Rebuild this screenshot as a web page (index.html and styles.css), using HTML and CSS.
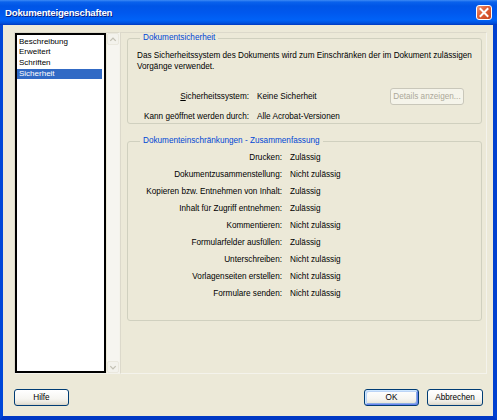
FILE: index.html
```html
<!DOCTYPE html>
<html lang="de">
<head>
<meta charset="utf-8">
<title>Dokumenteigenschaften</title>
<link rel="stylesheet" href="styles.css">
</head>
<body>
<div class="window">
  <div class="titlebar">
    <span class="title">Dokumenteigenschaften</span>
    <span class="close">
      <svg width="16" height="15" viewBox="0 0 16 15"><path d="M4.5 4 L11.5 11 M11.5 4 L4.5 11" stroke="#fff" stroke-width="2" stroke-linecap="square"/></svg>
    </span>
  </div>
  <div class="client">
    <div class="main">
      <div class="listframe">
        <ul class="list">
          <li>Beschreibung</li>
          <li>Erweitert</li>
          <li>Schriften</li>
          <li class="sel">Sicherheit</li>
        </ul>
        <div class="vscroll">
          <div class="sbtn"><svg width="11" height="11" viewBox="0 0 11 11"><path d="M2.5 7 L5.5 4 L8.5 7" fill="none" stroke="#C3C1B4" stroke-width="1.5"/></svg></div>
          <div class="track"></div>
          <div class="sbtn"><svg width="11" height="11" viewBox="0 0 11 11"><path d="M2.5 4 L5.5 7 L8.5 4" fill="none" stroke="#C3C1B4" stroke-width="1.5"/></svg></div>
        </div>
      </div>
      <div class="panel">
        <fieldset class="group g1">
          <legend>Dokumentsicherheit</legend>
          <p class="desc">Das Sicherheitssystem des Dokuments wird zum Einschränken der im Dokument zulässigen Vorgänge verwendet.</p>
          <div class="sec">
            <span class="lab"><u>S</u>icherheitssystem:</span>
            <span>Keine Sicherheit</span>
            <button class="btn disabled">Details anzeigen...</button>
            <span class="lab">Kann geöffnet werden durch:</span>
            <span>Alle Acrobat-Versionen</span>
            <span></span>
          </div>
        </fieldset>
        <fieldset class="group g2">
          <legend>Dokumenteinschränkungen - Zusammenfassung</legend>
          <div class="kv">
            <span class="lab">Drucken:</span><span>Zulässig</span>
            <span class="lab">Dokumentzusammenstellung:</span><span>Nicht zulässig</span>
            <span class="lab">Kopieren bzw. Entnehmen von Inhalt:</span><span>Zulässig</span>
            <span class="lab">Inhalt für Zugriff entnehmen:</span><span>Zulässig</span>
            <span class="lab">Kommentieren:</span><span>Nicht zulässig</span>
            <span class="lab">Formularfelder ausfüllen:</span><span>Zulässig</span>
            <span class="lab">Unterschreiben:</span><span>Nicht zulässig</span>
            <span class="lab">Vorlagenseiten erstellen:</span><span>Nicht zulässig</span>
            <span class="lab">Formulare senden:</span><span>Nicht zulässig</span>
          </div>
        </fieldset>
      </div>
    </div>
    <div class="footer">
      <button class="btn help">Hilfe</button>
      <div class="actions">
        <button class="btn default">OK</button>
        <button class="btn cancel">Abbrechen</button>
      </div>
    </div>
  </div>
</div>
</body>
</html>
```
FILE: styles.css
```css
* { box-sizing: border-box; }
html, body { margin: 0; padding: 0; background: #ECE9D8; }
body {
  font-family: "Liberation Sans", Arial, sans-serif;
  font-size: 8.2px;
  color: #000;
}
.window {
  width: 497px;
  height: 420px;
  display: flex;
  flex-direction: column;
  background: #ECE9D8;
}
.titlebar {
  height: 25px;
  flex: none;
  display: flex;
  align-items: center;
  justify-content: space-between;
  padding: 0 5px 1px 5px;
  background: linear-gradient(#3D8BF5 0, #0A62EC 2px, #0055E6 6px, #0058EE 50%, #0062F7 80%, #0052DE 92%, #0038C0 100%);
}
.title {
  color: #fff;
  font-weight: bold;
  font-size: 9.6px;
  letter-spacing: -0.2px;
  text-shadow: 1px 1px 0 #0A1E80;
}
.close {
  width: 16px;
  height: 15px;
  border: 1px solid #fff;
  border-radius: 3px;
  background: linear-gradient(135deg, #EE9A7C 0, #E0623A 40%, #C8431E 100%);
  display: flex;
  align-items: center;
  justify-content: center;
}
.close svg { display: block; margin: -1px; }
.client {
  flex: 1;
  display: flex;
  flex-direction: column;
  border-left: 3px solid #0047D8;
  border-right: 4px solid #0040D0;
  border-bottom: 4px solid #0038C4;
  padding: 7px 6px 0 11px;
}
.main {
  height: 342px;
  display: flex;
}
.listframe {
  width: 106px;
  display: flex;
  border: 1px solid #DCD9CB;
  border-right-color: #F4F3EC;
  border-bottom-color: #F4F3EC;
}
.list {
  list-style: none;
  margin: 0;
  width: 91px;
  background: #fff;
  border: 2px solid #000;
  padding: 1.6px 1px 0 0;
  line-height: 10.7px;
  font-size: 8px;
}
.list li { padding-left: 2px; }
.list li.sel { background: #316AC5; color: #fff; margin-right: 1px; }
.vscroll {
  width: 12px;
  margin-left: 1px;
  display: flex;
  flex-direction: column;
  background: #F6F5F0;
}
.sbtn {
  height: 12px;
  border: 1px solid #EAE8DE;
  border-radius: 2px;
  background: #F3F2EC;
  display: flex;
  align-items: center;
  justify-content: center;
}
.track { flex: 1; }
.panel {
  flex: 1;
  border: 1px solid #DCD9CB;
  border-right-color: #F4F3EC;
  border-bottom-color: #F4F3EC;
  padding: 0 4px 0 6px;
}
.group {
  margin: 0;
  border: 1px solid #D0D0BF;
  border-radius: 3px;
  padding: 0;
  min-width: 0;
}
.group legend {
  color: #0046D5;
  line-height: 10px;
  padding: 0 3px;
  margin-left: 12px;
}
.g1 { padding: 8px 4px 2px 0; }
.desc {
  margin: 0 0 16px 0;
  padding-left: 9px;
  line-height: 10.5px;
}
.sec {
  display: grid;
  grid-template-columns: 121px 1fr auto;
  column-gap: 8px;
  row-gap: 7px;
  align-items: center;
}
.lab { text-align: right; }
.lab u { text-decoration: underline; }
.btn {
  font-family: inherit;
  font-size: 8.2px;
  color: #000;
  height: 17px;
  padding: 0;
  border: 1px solid #003C74;
  border-radius: 3px;
  background: linear-gradient(#FFFFFF 0, #F6F5F1 60%, #E7E4DA 88%, #D7D2C6 100%);
}
.btn.disabled {
  width: 74px;
  margin-right: 13px;
  color: #ACA899;
  border-color: #C9C7BA;
  background: #F5F4EA;
}
.g2 { margin-top: 12px; padding: 2.5px 0 18.5px 0; }
.kv {
  display: grid;
  grid-template-columns: 154px 1fr;
  column-gap: 8px;
  line-height: 17px;
}
.footer {
  margin-top: 15px;
  padding-right: 4px;
  display: flex;
  justify-content: space-between;
}
.actions { display: flex; gap: 8px; }
.help { width: 55px; }
.cancel { width: 56px; }
.default {
  width: 55px;
  box-shadow: inset 1px 1px 0 #CEE7FF, inset -1px -1px 0 #6982EE, inset 2px 2px 0 #BCD4F6, inset -2px -2px 0 #89ADE4;
}
```
